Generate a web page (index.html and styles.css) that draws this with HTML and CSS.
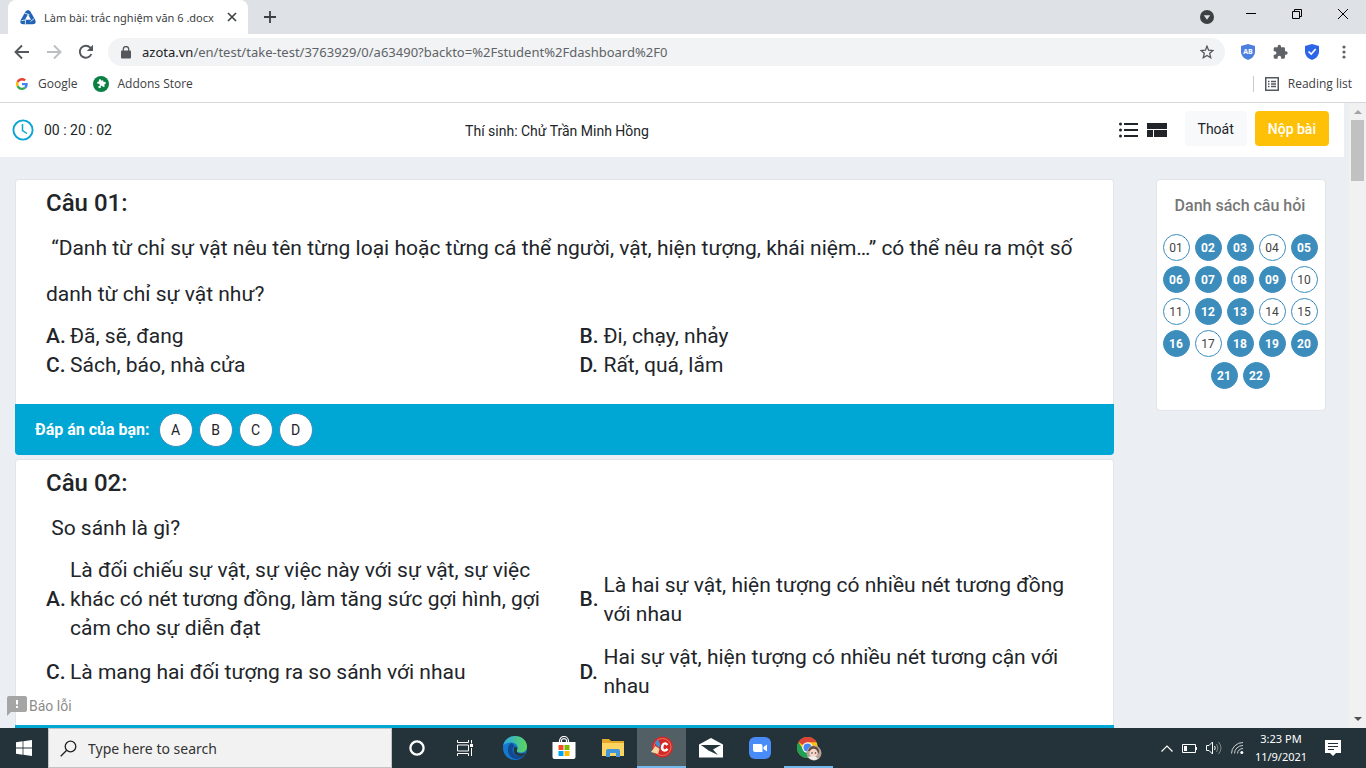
FILE: index.html
```html
<!DOCTYPE html>
<html lang="vi">
<head>
<meta charset="utf-8">
<title>Làm bài: trắc nghiệm văn 6 .docx</title>
<link rel="stylesheet" href="styles.css">
</head>
<body>
<div class="tabstrip">
  <div class="tab">
    <svg width="16" height="16" viewBox="0 0 16 16"><path d="M5.600 2.600Q8-.6 10.400 2.600L15 10.600Q17 15.300 12.500 15.300H3.500Q-1 15.300 1 10.600Z" fill="#2163b4"/><path d="M8 5.200 11 10.700H5Z" fill="#fff"/><path d="M4.800 4.200 9.500 5.800M14.300 9.500 10.500 12.500M1.500 11.600 5.400 11V15" stroke="#fff" stroke-width=".8" fill="none"/></svg>
    <span class="tab-title">Làm bài: trắc nghiệm văn 6 .docx</span>
    <button class="plain" aria-label="Close tab"><svg width="10" height="10" viewBox="0 0 10 10"><path d="M1 1 9 9M9 1 1 9" stroke="#3c4043" stroke-width="1.600"/></svg></button>
  </div>
  <button class="plain new-tab" aria-label="New tab"><svg width="12" height="12" viewBox="0 0 12 12"><path d="M6 0V12M0 6H12" stroke="#3c4043" stroke-width="1.800"/></svg></button>
  <div class="window-controls">
    <button class="plain tab-search" aria-label="Tab search"><svg width="14" height="14" viewBox="0 0 14 14"><circle cx="7" cy="7" r="7" fill="#3c4043"/><path d="M3.800 5.300H10.200L7 9.700Z" fill="#dee1e6"/></svg></button>
    <button class="plain" aria-label="Minimize"><svg width="10" height="10" viewBox="0 0 10 10"><path d="M0 4.500H10" stroke="#000"/></svg></button>
    <button class="plain" aria-label="Restore"><svg width="10" height="10" viewBox="0 0 10 10"><path d="M.5 2.500H7.500V9.500H.5ZM2.500 2.500V.5H9.500V7.500H7.500" fill="none" stroke="#000"/></svg></button>
    <button class="plain" aria-label="Close"><svg width="10" height="10" viewBox="0 0 10 10"><path d="M0 0 10 10M10 0 0 10" stroke="#000"/></svg></button>
  </div>
</div>

<div class="toolbar">
  <button class="plain" aria-label="Back"><svg width="16" height="16" viewBox="0 0 16 16"><path d="M15 8H2M8 1.500 1.500 8 8 14.500" fill="none" stroke="#54575b" stroke-width="1.900"/></svg></button>
  <button class="plain" aria-label="Forward"><svg width="16" height="16" viewBox="0 0 16 16"><path d="M1 8H14M8 1.500 14.500 8 8 14.500" fill="none" stroke="#bcbec1" stroke-width="1.900"/></svg></button>
  <button class="plain" aria-label="Reload"><svg width="16" height="16" viewBox="0 0 16 16"><path d="M13.400 10A6 6 0 1 1 12.300 3.700L14 5.400" fill="none" stroke="#54575b" stroke-width="1.900"/><path d="M15 .8V7H8.800Z" fill="#54575b"/></svg></button>
  <div class="address">
    <svg width="10" height="13" viewBox="0 0 10 13"><rect y="4.500" width="10" height="8" rx="1" fill="#54575b"/><path d="M2.300 5V3.300a2.700 2.700 0 0 1 5.400 0V5" fill="none" stroke="#54575b" stroke-width="1.300"/></svg>
    <span class="url"><b>azota.vn</b>/en/test/take-test/3763929/0/a63490?backto=%2Fstudent%2Fdashboard%2F0</span>
    <button class="plain" aria-label="Bookmark"><svg width="14" height="14" viewBox="0 0 14 14"><path d="M7 1.200 8.600 5.200 13 5.500 9.700 8.300 10.700 12.700 7 10.400 3.300 12.700 4.300 8.300 1 5.500 5.400 5.200Z" fill="none" stroke="#54575b" stroke-width="1.300"/></svg></button>
  </div>
  <div class="extensions">
    <svg width="14" height="16" viewBox="0 0 14 16"><path d="M7 0 14 2V8Q14 13 7 16 0 13 0 8V2Z" fill="#4c7fe0"/><text x="7" y="10" class="ab-text">AB</text></svg>
    <svg width="16" height="16" viewBox="0 0 24 24"><path d="M21 11h-1.500V7a2 2 0 0 0-2-2h-4V3.500a2.500 2.500 0 0 0-5 0V5h-4a2 2 0 0 0-2 2v3.800H4a2.700 2.700 0 0 1 0 5.400H2.500V20a2 2 0 0 0 2 2h3.800v-1.500a2.700 2.700 0 0 1 5.400 0V22h3.800a2 2 0 0 0 2-2v-4H21a2.500 2.500 0 0 0 0-5z" fill="#5f6368"/></svg>
    <svg width="14" height="16" viewBox="0 0 14 16"><path d="M7 0 14 2V8Q14 13 7 16 0 13 0 8V2Z" fill="#2c65e8"/><path d="M3.500 7.500 6.200 10 10.700 5" fill="none" stroke="#fff" stroke-width="1.600"/></svg>
    <svg width="16" height="16" viewBox="0 0 16 16" fill="#5f6368"><circle cx="8" cy="3" r="1.600"/><circle cx="8" cy="8" r="1.600"/><circle cx="8" cy="13" r="1.600"/></svg>
  </div>
</div>

<nav class="bookmarks">
  <a href="#"><svg width="12" height="12" viewBox="0 0 48 48"><path fill="#ea4335" d="M24 9.500c3.500 0 6.700 1.200 9.200 3.600l6.900-6.900C35.900 2.400 30.500 0 24 0 14.600 0 6.500 5.400 2.600 13.200l8 6.200C12.400 13.700 17.700 9.500 24 9.500z"/><path fill="#4285f4" d="M47 24.500c0-1.600-.2-3.100-.4-4.500H24v9h12.900c-.6 3-2.200 5.500-4.700 7.200l7.700 6C44.400 38 47 31.800 47 24.500z"/><path fill="#fbbc05" d="M10.500 28.600a14.500 14.500 0 0 1 0-9.200l-8-6.200a24 24 0 0 0 0 21.600z"/><path fill="#34a853" d="M24 48c6.500 0 11.900-2.100 15.900-5.800l-7.700-6c-2.200 1.500-4.900 2.300-8.200 2.300-6.300 0-11.600-4.200-13.500-9.900l-8 6.200C6.500 42.600 14.600 48 24 48z"/></svg>Google</a>
  <a href="#"><svg width="16" height="16" viewBox="0 0 16 16"><circle cx="8" cy="8" r="8" fill="#0b8043"/><path d="M5.500 5H6.800V4.300a1.200 1.200 0 0 1 2.400 0V5H11V6.800H11.700a1.200 1.200 0 0 1 0 2.400H11V11.500H9V10.800a1 1 0 0 0-2 0V11.500H4.800V9.500H5.500a1.200 1.200 0 0 0 0-2.400H4.800V5Z" fill="#fff" transform="rotate(-15 8 8)"/></svg>Addons Store</a>
  <button class="plain reading"><svg width="14" height="14" viewBox="0 0 14 14"><rect x=".75" y=".75" width="12.500" height="12.500" fill="none" stroke="#54575b" stroke-width="1.500"/><path d="M3 4.500H4.500M3 7H4.500M3 9.500H4.500M6 4.500H11M6 7H11M6 9.500H11" stroke="#54575b" stroke-width="1.300"/></svg>Reading list</button>
</nav>

<div class="viewport">
  <div class="page">
    <header class="exam-header">
      <div class="timer"><svg width="22" height="22" viewBox="0 0 22 22"><circle cx="11" cy="11" r="9.600" fill="none" stroke="#0ba5d3" stroke-width="1.900"/><path d="M10.500 5V11.500L15 14.500" fill="none" stroke="#0ba5d3" stroke-width="1.500"/></svg>00 : 20 : 02</div>
      <div class="candidate">Thí sinh: Chử Trần Minh Hồng</div>
      <div class="actions">
        <button class="plain" aria-label="List view"><svg width="20" height="16" viewBox="0 0 20 16" fill="#212529"><path d="M5 1H19V3H5ZM5 7H19V9H5ZM5 13H19V15H5Z"/><circle cx="1.500" cy="2" r="1.500"/><circle cx="1.500" cy="8" r="1.500"/><circle cx="1.500" cy="14" r="1.500"/></svg></button>
        <button class="plain" aria-label="Board view"><svg width="20" height="14" viewBox="0 0 20 14" fill="#212529"><path d="M0 0H20V6H0ZM0 7H6V14H0ZM7 7H20V14H7Z"/></svg></button>
        <button class="btn btn-light">Thoát</button>
        <button class="btn btn-submit">Nộp bài</button>
      </div>
    </header>
    <div class="content">
      <main class="questions">
        <section class="question">
          <div class="question-body">
            <h2>Câu 01:</h2>
            <p>&nbsp;“Danh từ chỉ sự vật nêu tên từng loại hoặc từng cá thể người, vật, hiện tượng, khái niệm…” có thể nêu ra một số danh từ chỉ sự vật như?</p>
            <div class="choices">
              <div class="choice"><b>A.</b><span>Đã, sẽ, đang</span></div>
              <div class="choice"><b>B.</b><span>Đi, chạy, nhảy</span></div>
              <div class="choice"><b>C.</b><span>Sách, báo, nhà cửa</span></div>
              <div class="choice"><b>D.</b><span>Rất, quá, lắm</span></div>
            </div>
          </div>
          <div class="answer-bar"><strong>Đáp án của bạn:</strong><button>A</button><button>B</button><button>C</button><button>D</button></div>
        </section>
        <section class="question">
          <div class="question-body">
            <h2>Câu 02:</h2>
            <p>&nbsp;So sánh là gì?</p>
            <div class="choices">
              <div class="choice"><b>A.</b><span>Là đối chiếu sự vật, sự việc này với sự vật, sự việc khác có nét tương đồng, làm tăng sức gợi hình, gợi cảm cho sự diễn đạt</span></div>
              <div class="choice"><b>B.</b><span>Là hai sự vật, hiện tượng có nhiều nét tương đồng với nhau</span></div>
              <div class="choice"><b>C.</b><span>Là mang hai đối tượng ra so sánh với nhau</span></div>
              <div class="choice"><b>D.</b><span>Hai sự vật, hiện tượng có nhiều nét tương cận với nhau</span></div>
            </div>
          </div>
          <div class="answer-bar"></div>
        </section>
      </main>
      <aside class="question-list">
        <h3>Danh sách câu hỏi</h3>
        <div class="numbers">
          <button>01</button><button class="done">02</button><button class="done">03</button><button>04</button><button class="done">05</button>
          <button class="done">06</button><button class="done">07</button><button class="done">08</button><button class="done">09</button><button>10</button>
          <button>11</button><button class="done">12</button><button class="done">13</button><button>14</button><button>15</button>
          <button class="done">16</button><button>17</button><button class="done">18</button><button class="done">19</button><button class="done">20</button>
          <button class="done">21</button><button class="done">22</button>
        </div>
      </aside>
    </div>
    <button class="plain report"><svg width="20" height="20" viewBox="0 0 20 20"><path d="M2 0H18Q20 0 20 2V14Q20 16 18 16H4L0 20V2Q0 0 2 0Z" fill="#a5a5a5"/><path d="M9 4H11V8.500H9ZM9 10H11V12H9Z" fill="#fff"/></svg>Báo lỗi</button>
  </div>
  <div class="scrollbar">
    <svg width="8" height="4" viewBox="0 0 8 4"><path d="M0 4 4 0 8 4Z" fill="#a3a3a3"/></svg>
    <div class="thumb"></div>
    <svg width="8" height="4" viewBox="0 0 8 4"><path d="M0 0 4 4 8 0Z" fill="#505050"/></svg>
  </div>
</div>

<footer class="taskbar">
  <button class="plain task start" aria-label="Start"><svg width="16" height="16" viewBox="0 0 16 16" fill="#fff"><path d="M0 2.200 6.600 1.300V7.500H0ZM7.400 1.200 16 0V7.500H7.400ZM0 8.400H6.600V14.700L0 13.800ZM7.400 8.400H16V16L7.400 14.800Z"/></svg></button>
  <label class="search"><svg width="17" height="17" viewBox="0 0 17 17"><circle cx="10.500" cy="6.500" r="5.300" fill="none" stroke="#222" stroke-width="1.300"/><path d="M6.700 10.300.7 16.300" stroke="#222" stroke-width="1.300"/></svg><input type="text" placeholder="Type here to search" aria-label="Type here to search"></label>
  <button class="plain task" aria-label="Cortana"><svg width="16" height="16" viewBox="0 0 16 16"><circle cx="8" cy="8" r="6.600" fill="none" stroke="#fff" stroke-width="2.300"/></svg></button>
  <button class="plain task" aria-label="Task view"><svg width="17" height="16" viewBox="0 0 17 16"><path d="M.5 0V2.500H11.500V0M.5 16V13.500H11.500V16M.5 5H11.500V11H.5ZM14.500 0V3.500M14.500 8V16" fill="none" stroke="#fff"/><path d="M13 4H16V7H13Z" fill="#fff"/></svg></button>
  <button class="plain task" aria-label="Edge"><svg width="24" height="24" viewBox="0 0 24 24"><defs><linearGradient id="eg" x1="0" x2="1"><stop offset="0" stop-color="#2ba8e8"/><stop offset="1" stop-color="#5bd75a"/></linearGradient></defs><circle cx="12" cy="12" r="12" fill="#1479cf"/><path d="M0 10C1 4 6 0 12 0c7 0 12 5 12 10.500 0 4-3 6-6.500 6-3 0-4.500-1-3.500-2.500 2-4-1-7.500-6-7.500C4 6.500 1 8 0 10Z" fill="url(#eg)"/><path d="M8.500 7C4 9 3.500 17 8 21c4 3.500 10 2.500 13.500-2-5 2.500-10 .5-11.500-3-.9-2.500 0-4.700 1.500-5.500C11 9 10 7.600 8.500 7Z" fill="#124a91"/><path d="M14 14c-1 2 1 3.500 4 3.500 2 0 3.500-.5 4.500-1.500l-1 3c-4 2-8 .7-10-1.500-1.300-2-.9-5.500.5-6.700 2 0 3 1.200 2 3.200Z" fill="#26353c"/></svg></button>
  <button class="plain task" aria-label="Microsoft Store"><svg width="24" height="24" viewBox="0 0 24 24"><path d="M7.500 7V5a4.500 4.500 0 0 1 9 0V7M9.500 7V4a3 3 0 0 1 5 0V7" fill="none" stroke="#fff" stroke-width="1.200"/><path d="M.5 6H23.500V21Q23.500 23 21.500 23H2.500Q.5 23 .5 21Z" fill="#fff"/><path fill="#f25022" d="M6.500 9H11.500V14H6.500Z"/><path fill="#7fba00" d="M12.500 9H17.500V14H12.500Z"/><path fill="#00a4ef" d="M6.500 15H11.500V20H6.500Z"/><path fill="#ffb900" d="M12.500 15H17.500V20H12.500Z"/></svg></button>
  <button class="plain task" aria-label="File Explorer"><svg width="22" height="18" viewBox="0 0 22 18"><path d="M0 0H7L9 2H22V17H0Z" fill="#e5a929"/><path d="M0 4H22V17H0Z" fill="#fcd462"/><path d="M4 18V12Q4 10 6 10H16Q18 10 18 12V18H14V14H8V18Z" fill="#3f96dc"/></svg></button>
  <button class="plain task active" aria-label="CCleaner"><svg width="24" height="24" viewBox="0 0 24 24"><circle cx="12.500" cy="12" r="10.500" fill="#d12a25"/><circle cx="12.500" cy="12" r="8.500" fill="none" stroke="#ee716a"/><path d="M17.500 10Q15 7 13 9.500 11 13 13 15 15.500 16.500 17.500 13.800" fill="none" stroke="#fff" stroke-width="2.400"/><path d="M8 4 10.500 10 8.500 13 5 8Z" fill="#3f8fd3"/><path d="M5.500 11 9.500 14 8 19 1 17Z" fill="#f2d7a5"/></svg></button>
  <button class="plain task" aria-label="Mail"><svg width="24" height="20" viewBox="0 0 24 20"><path d="M12 0 24 6.500V19.500H0V6.500Z" fill="#fff"/><path d="M2 7H22L14 11.500 19 17 9.500 12.500Z" fill="#26353c"/></svg></button>
  <button class="plain task" aria-label="Zoom"><svg width="22" height="22" viewBox="0 0 22 22"><rect width="22" height="22" rx="6" fill="#4a8cf7"/><path d="M4 7H11.500Q13.500 7 13.500 9V15H6Q4 15 4 13ZM14.500 10 18 7.500V14.500L14.500 12Z" fill="#fff"/></svg></button>
  <button class="plain task running" aria-label="Chrome"><svg width="26" height="25" viewBox="0 0 26 25"><circle cx="11.500" cy="11.500" r="10.500" fill="#fbc116"/><path d="M11.500 11.500 2.400 6.200A10.500 10.500 0 0 1 20.600 6.200H11.500Z" fill="#dd4336"/><path d="M2.400 6.200A10.500 10.500 0 0 0 11.500 22L15.500 15 7.500 14Z" fill="#1fa055"/><circle cx="11.500" cy="11.500" r="5.200" fill="#fff"/><circle cx="11.500" cy="11.500" r="4" fill="#4285f4"/><circle cx="18" cy="17" r="7.500" fill="#b7a197"/><path d="M12 15Q14 9.500 19 10.500 24 12 23 18L20 13.500 14 15Z" fill="#624941"/><ellipse cx="17.500" cy="17" rx="4" ry="4.300" fill="#f4d6ca"/><path d="M12 21Q18 19 22 22.500 17 26.500 12 21Z" fill="#f0eeee"/><circle cx="16" cy="17" r=".8" fill="#50322e"/><circle cx="19.500" cy="17" r=".8" fill="#50322e"/></svg></button>
  <div class="tray">
    <svg width="12" height="7" viewBox="0 0 12 7"><path d="M.5 6.500 6 1 11.500 6.500" fill="none" stroke="#fff" stroke-width="1.200"/></svg>
    <svg width="15" height="9" viewBox="0 0 15 9"><path d="M.5.500H13.500V8.500H.5Z" fill="none" stroke="#fff"/><path d="M2 2H5V7H2ZM14 3H15V6H14Z" fill="#fff"/></svg>
    <svg width="16" height="14" viewBox="0 0 16 14"><path d="M.5 4.500H3L6.500 1V13L3 9.500H.5Z" fill="none" stroke="#fff"/><path d="M8.500 5Q10 7 8.500 9" fill="none" stroke="#fff"/><path d="M10.500 3Q13.500 7 10.500 11M12.500 1Q17.500 7 12.500 13" fill="none" stroke="#7d8689"/></svg>
    <svg width="13" height="12" viewBox="0 0 13 12"><path d="M.5 11.500A11.500 11 0 0 1 12 .5M3.500 11.500A8.500 8 0 0 1 12 3.500M6.500 11.500A5.500 5 0 0 1 12 6.500" fill="none" stroke="#cdd1d2"/><circle cx="10.800" cy="10.500" r="1.500" fill="#fff"/></svg>
    <div class="clock">3:23 PM<br>11/9/2021</div>
    <svg width="16" height="16" viewBox="0 0 16 16"><path d="M0 0H16V13H11L8 16 5 13H0Z" fill="#fff"/><path d="M3 3.500H13M3 6.500H13M3 9.500H9" stroke="#1f2e35"/></svg>
  </div>
</footer>
</body>
</html>
```
FILE: styles.css
```css
* { box-sizing: border-box; }

body {
  margin: 0;
  height: 100vh;
  display: flex;
  flex-direction: column;
  overflow: hidden;
  font-family: Roboto, sans-serif;
  color: #212529;
}

button { font-family: inherit; cursor: pointer; }
svg { display: block; flex: none; }

.plain {
  display: flex;
  align-items: center;
  justify-content: center;
  padding: 0;
  border: 0;
  background: none;
  color: inherit;
}

/* Browser frame */
.tabstrip, .toolbar, .bookmarks, .taskbar {
  flex: none;
  display: flex;
  align-items: center;
  font-family: "Noto Sans", sans-serif;
}

.tabstrip {
  height: 34px;
  padding-left: 8px;
  background: #dee1e6;
}

.tab {
  align-self: stretch;
  width: 240px;
  display: flex;
  align-items: center;
  gap: 8px;
  padding: 0 11px 0 12px;
  border-radius: 8px 8px 0 0;
  background: #fff;
  color: #3c4043;
  font-size: 11px;
}

.tab-title { flex: 1; white-space: nowrap; }
.new-tab { margin-left: 16px; }

.window-controls {
  display: flex;
  align-items: center;
  gap: 36px;
  margin-left: auto;
  padding: 0 18px 6px 0;
}

.tab-search { margin: 5px -4px 0 0; }

.toolbar {
  height: 36px;
  gap: 16px;
  padding: 0 14px;
}

.address {
  flex: 1;
  height: 28px;
  display: flex;
  align-items: center;
  gap: 11px;
  padding: 0 11px 0 13px;
  margin-left: -2px;
  border-radius: 14px;
  background: #f1f3f4;
  color: #5f6368;
  font-size: 13px;
}

.url { flex: 1; }
.url b { font-weight: 400; color: #202124; }

.extensions { display: flex; gap: 17px; }
.ab-text { font: 700 7px "Open Sans", sans-serif; fill: #fff; text-anchor: middle; }

.bookmarks {
  height: 33px;
  gap: 16px;
  padding: 0 14px 5px 16px;
  border-bottom: 1px solid #d5d7da;
  color: #3c4043;
  font-family: "Open Sans", sans-serif;
  font-size: 12px;
}

.bookmarks a {
  display: flex;
  align-items: center;
  gap: 8px;
  color: inherit;
  text-decoration: none;
}

.bookmarks a:first-child { gap: 10px; }

.reading {
  gap: 9px;
  height: 16px;
  margin-left: auto;
  padding-left: 11px;
  border-left: 1px solid #c8cace;
  font-size: 12px;
}

/* Exam page */
.viewport { flex: 1; min-height: 0; display: flex; }

.page {
  position: relative;
  flex: 1;
  min-width: 0;
  overflow: hidden;
  background: #ebeef3;
}

.exam-header {
  display: flex;
  align-items: center;
  height: 54px;
  margin-right: 5px;
  padding: 0 15px 0 12px;
  background: #fff;
  font-size: 14px;
}

.timer { width: 108px; display: flex; align-items: center; gap: 10px; white-space: nowrap; }
.candidate { flex: 1; padding-top: 2px; text-align: center; }

.actions {
  width: 335px;
  display: flex;
  justify-content: flex-end;
  align-items: center;
  gap: 8px;
  padding-bottom: 3px;
}

.actions .plain { padding-top: 2px; }

.btn {
  height: 35px;
  padding: 0 13px;
  border: 0;
  border-radius: 4px;
  font-size: 14px;
  font-weight: 400;
}

.btn-light { margin-left: 10px; background: #f8f9fa; color: #212529; }
.btn-submit { background: #ffc107; color: #fff; font-weight: 500; }

.content {
  display: flex;
  align-items: flex-start;
  gap: 42px;
  padding: 22px 23px 0 15px;
}

.questions { flex: 1; min-width: 0; }
.question { margin-bottom: 4px; }

.question-body {
  padding: 8px 0 24px 30px;
  border: 1px solid #e1e4e8;
  border-bottom: 0;
  border-radius: 4px 4px 0 0;
  background: #fff;
}

.question h2 { margin: 0 0 7px; font-size: 24px; font-weight: 500; line-height: 30px; }
.question p { margin: 0 0 5px; padding-right: 31px; font-size: 21px; line-height: 46px; }

.choices {
  display: grid;
  grid-template-columns: 1fr 1fr;
  font-size: 21px;
  line-height: 29px;
}

.choice { display: flex; align-items: center; padding-right: 24px; }
.choice b { flex: none; width: 24px; font-weight: 500; }

.answer-bar {
  display: flex;
  align-items: center;
  gap: 6px;
  height: 51px;
  padding: 0 20px;
  border-radius: 0 0 4px 4px;
  background: #00a7d4;
  color: #fff;
}

.answer-bar strong { margin-right: 3px; font-size: 16px; font-weight: 700; }

.answer-bar button {
  width: 34px;
  height: 34px;
  padding: 0;
  border: 1px solid #3c8dbc;
  border-radius: 50%;
  background: #fff;
  color: #212529;
  font-size: 14px;
}

.question-list {
  width: 170px;
  flex: none;
  padding: 15px 6px 21px 4px;
  border: 1px solid #e1e4e8;
  border-radius: 4px;
  background: #fff;
}

.question-list h3 {
  margin: 0 0 18px;
  color: #777;
  font-size: 16px;
  font-weight: 500;
  line-height: 21px;
  text-align: center;
}

.numbers { display: flex; flex-wrap: wrap; justify-content: center; gap: 5px; }

.numbers button {
  width: 27px;
  height: 27px;
  padding: 0;
  border: 1px solid #3c8dbc;
  border-radius: 50%;
  background: #fff;
  color: #444;
  font-size: 12px;
}

.numbers .done { background: #3c8dbc; color: #fff; font-weight: 700; }

.report {
  position: absolute;
  left: 7px;
  bottom: 12px;
  gap: 2px;
  color: #8b8b8b;
  font-size: 14px;
}

.scrollbar {
  width: 17px;
  flex: none;
  display: flex;
  flex-direction: column;
  align-items: center;
  padding: 7px 0;
  background: #f1f1f1;
}

.thumb { width: 13px; height: 61px; margin: 6px 0 auto; background: #c1c1c1; }

/* Taskbar */
.taskbar { height: 40px; background: #24333a; color: #fff; }
.task { width: 49px; height: 40px; }
.start { width: 48px; }
.active { border-bottom: 2px solid #76b9ed; background: #526065; }
.running { box-shadow: inset 0 -2px #76b9ed; }

.search {
  width: 344px;
  height: 40px;
  display: flex;
  align-items: center;
  gap: 11px;
  padding: 0 11px;
  border: 1px solid #c4c4c4;
  background: #f2f2f2;
}

.search input {
  flex: 1;
  min-width: 0;
  padding: 0;
  border: 0;
  background: none;
  font-family: inherit;
  font-size: 14px;
}

.search input::placeholder { color: #333; opacity: 1; }

.tray {
  display: flex;
  align-items: center;
  gap: 9px;
  margin-left: auto;
  padding-right: 25px;
}

.clock { width: 56px; margin-right: 7px; font-size: 11px; line-height: 18px; text-align: center; }
```
